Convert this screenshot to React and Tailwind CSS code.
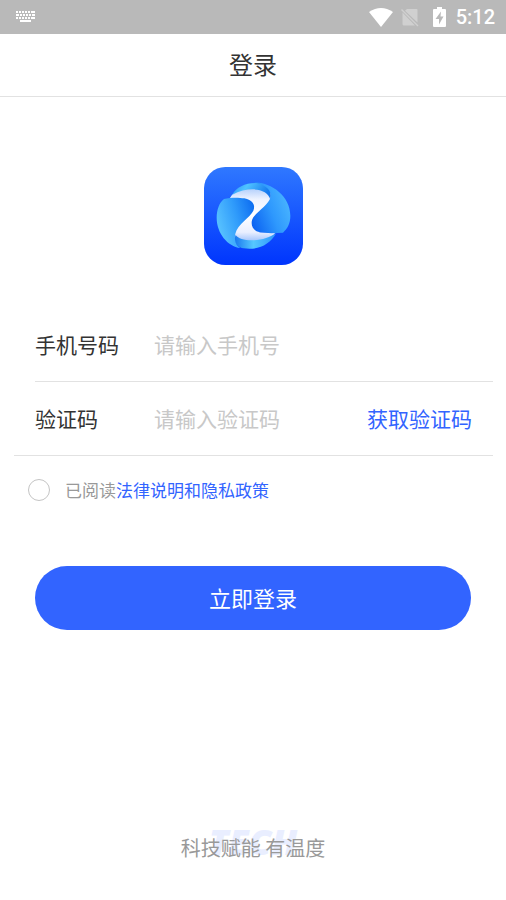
import { useState } from 'react';

const KeyboardIcon = () => (
  <svg viewBox="0 0 20 12" className="h-3 w-5" fill="#fff" aria-hidden="true">
    <path d="M0 0h2v2H0zM3 0h2v2H3zM6 0h2v2H6zM9 0h2v2H9zM12 0h2v2h-2zM15 0h4v2h-4zM0 3h3v2H0zM4 3h2v2H4zM7 3h2v2H7zM10 3h2v2h-2zM13 3h2v2h-2zM16 3h3v2h-3zM0 6h2v2H0zM3 6h2v2H3zM6 6h2v2H6zM9 6h2v2H9zM12 6h2v2h-2zM15 6h4v2h-4zM4 9h11v2H4z" />
  </svg>
);

const WifiIcon = () => (
  <svg viewBox="0 0 24 19" className="h-[19px] w-6" aria-hidden="true">
    <path d="M0 4Q12-4 24 4L12 19Z" fill="#fff" />
  </svg>
);

const NoSimIcon = () => (
  <svg viewBox="0 0 18 19" className="h-[19px] w-[18px]" aria-hidden="true">
    <path
      d="M6 1h9.500q1 0 1 1v12.500L4 2.800zM1.500 4.500 14 17.500H3q-1.500 0-1.500-1.500z"
      fill="#d0d0d0"
    />
    <path d="M.5 1.500 17 18" stroke="#d0d0d0" strokeWidth="1.500" />
  </svg>
);

const BatteryIcon = () => (
  <svg viewBox="0 0 13 20" className="h-5 w-[13px]" aria-hidden="true">
    <path
      d="M4 0h5v2h3q1 0 1 1v16q0 1-1 1H1q-1 0-1-1V3q0-1 1-1h3z"
      fill="#fff"
    />
    <path d="M8 4.500 2.500 12H6v5.500L10.500 9.500H7.500z" fill="#b9b9b9" />
  </svg>
);

const StatusBar = () => (
  <div className="flex h-[34px] items-center justify-between bg-[#b9b9b9] pl-4 pr-[11px]">
    <KeyboardIcon />
    <div className="flex items-center">
      <WifiIcon />
      <span className="ml-2 flex">
        <NoSimIcon />
      </span>
      <span className="ml-3.5 flex">
        <BatteryIcon />
      </span>
      <span className="ml-2.5 font-['Roboto',sans-serif] text-xl font-medium leading-6 text-white">
        5:12
      </span>
    </div>
  </div>
);

const Logo = () => (
  <svg viewBox="39 36 297 294" className="h-[98px] w-[99px]" aria-hidden="true">
    <defs>
      <linearGradient id="tile" x1="0" y1="0" x2="0" y2="1">
        <stop offset="0" stopColor="#2f78ff" />
        <stop offset="1" stopColor="#0035fd" />
      </linearGradient>
      <linearGradient id="left" x1="0" y1=".65" x2="1" y2=".25">
        <stop offset="0" stopColor="#5cc6ff" />
        <stop offset=".55" stopColor="#309cfb" />
        <stop offset="1" stopColor="#0f70f2" />
      </linearGradient>
      <linearGradient id="right" x1="1" y1=".3" x2="0" y2=".8">
        <stop offset="0" stopColor="#4cb8ff" />
        <stop offset=".5" stopColor="#2e98fd" />
        <stop offset="1" stopColor="#0c63f2" />
      </linearGradient>
      <linearGradient id="top" x1="0" y1="0" x2="1" y2=".3">
        <stop offset="0" stopColor="#2a90f8" />
        <stop offset=".4" stopColor="#4fc3ff" />
        <stop offset="1" stopColor="#1478ef" />
      </linearGradient>
      <linearGradient id="bottom" x1="0" y1="0" x2="1" y2="0">
        <stop offset="0" stopColor="#1a78ee" />
        <stop offset=".45" stopColor="#55c8ff" />
        <stop offset="1" stopColor="#2d93fb" />
      </linearGradient>
      <linearGradient id="body" x1="0" y1="0" x2="0" y2="1">
        <stop offset="0" stopColor="#a9c9fb" />
        <stop offset=".22" stopColor="#eef3ff" />
        <stop offset=".5" stopColor="#fff" />
        <stop offset=".8" stopColor="#e9efff" />
        <stop offset="1" stopColor="#8fb8fa" />
      </linearGradient>
    </defs>
    <rect x="39" y="36" width="297" height="294" rx="64" fill="url(#tile)" />
    <path
      d="M117 129C135 96 190 82 237 112C262 145 218 180 205 232H254C232 264 170 280 130 250C125 205 160 170 176 150Z"
      fill="url(#body)"
    />
    <path
      d="M124 119C137 94 170 80 208 85C232 91 244 108 238 134C230 98 172 94 124 119Z"
      fill="url(#top)"
    />
    <path
      d="M188 82C244 82 299 126 298 184C298 205 289 222 276 233C250 235 223 235 207 232C183 228 176 205 187 187C202 166 234 148 239 125C242 102 218 86 188 82Z"
      fill="url(#right)"
    />
    <path
      d="M134 240C150 264 222 260 256 234C236 270 201 286 158 280C134 275 126 258 134 240Z"
      fill="url(#bottom)"
    />
    <path
      d="M99 132C117 127 143 127 160 130C183 134 195 149 187 167C177 188 140 206 133 236C129 255 134 270 148 279C110 274 77 235 77 188C77 165 85 142 99 132Z"
      fill="url(#left)"
    />
  </svg>
);

const inputClass =
  'h-8 w-0 min-w-0 flex-1 bg-transparent text-[21px] leading-8 text-[#333] outline-none placeholder:text-[#c8c8c8]';

const App = () => {
  const [form, setForm] = useState({ phone: '', code: '', agreed: false });

  const handleChange = (e) => {
    const { name, type, value, checked } = e.target;
    setForm({ ...form, [name]: type === 'checkbox' ? checked : value });
  };

  return (
    <div className="flex min-h-screen flex-col bg-white font-['Noto_Sans_CJK_SC',sans-serif] text-[#333]">
      <StatusBar />
      <header className="border-b border-[#e2e2e2] pb-4 pt-3.5">
        <h1 className="text-center text-2xl leading-8">登录</h1>
      </header>

      <main className="flex flex-1 flex-col">
        <div className="flex justify-center pb-[43px] pt-[70px]">
          <Logo />
        </div>

        <form onSubmit={(e) => e.preventDefault()}>
          <div className="ml-[35px] mr-[13px] flex items-center border-b border-[#e2e2e2] pb-[21px] pt-5">
            <label htmlFor="phone" className="w-[119px] text-[21px] leading-8">
              手机号码
            </label>
            <input
              id="phone"
              name="phone"
              type="tel"
              placeholder="请输入手机号"
              className={inputClass}
              value={form.phone}
              onChange={handleChange}
            />
          </div>
          <div className="ml-3.5 mr-[13px] flex items-center border-b border-[#e2e2e2] px-[21px] pb-[21px] pt-5">
            <label htmlFor="code" className="w-[119px] text-[21px] leading-8">
              验证码
            </label>
            <input
              id="code"
              name="code"
              type="text"
              placeholder="请输入验证码"
              className={inputClass}
              value={form.code}
              onChange={handleChange}
            />
            <button type="button" className="text-[21px] leading-8 text-[#3264ff]">
              获取验证码
            </button>
          </div>

          <div className="flex items-center pl-7 pt-[22px] text-[17px] leading-6">
            <input
              id="agreed"
              name="agreed"
              type="checkbox"
              className="size-[22px] appearance-none rounded-full border border-[#c4c4c4] checked:border-[#3264ff] checked:bg-[#3264ff]"
              checked={form.agreed}
              onChange={handleChange}
            />
            <label htmlFor="agreed" className="pl-[15px] text-[#999]">
              已阅读
            </label>
            <a href="#terms" className="text-[#3264ff]">
              法律说明和隐私政策
            </a>
          </div>

          <div className="px-[35px] pt-16">
            <button
              type="submit"
              className="w-full rounded-full bg-[#3264ff] pb-[17px] pt-[15px] text-[22px] leading-8 text-white"
            >
              立即登录
            </button>
          </div>
        </form>

        <footer className="relative mt-auto pb-9 text-center">
          <span className="absolute inset-x-0 top-0 font-['Open_Sans',sans-serif] text-4xl font-extrabold italic leading-9 text-[#e9eeff]">
            TECH
          </span>
          <p className="relative pt-2 text-xl leading-8 text-[#999]">
            科技赋能 有温度
          </p>
        </footer>
      </main>
    </div>
  );
};

export default App;
